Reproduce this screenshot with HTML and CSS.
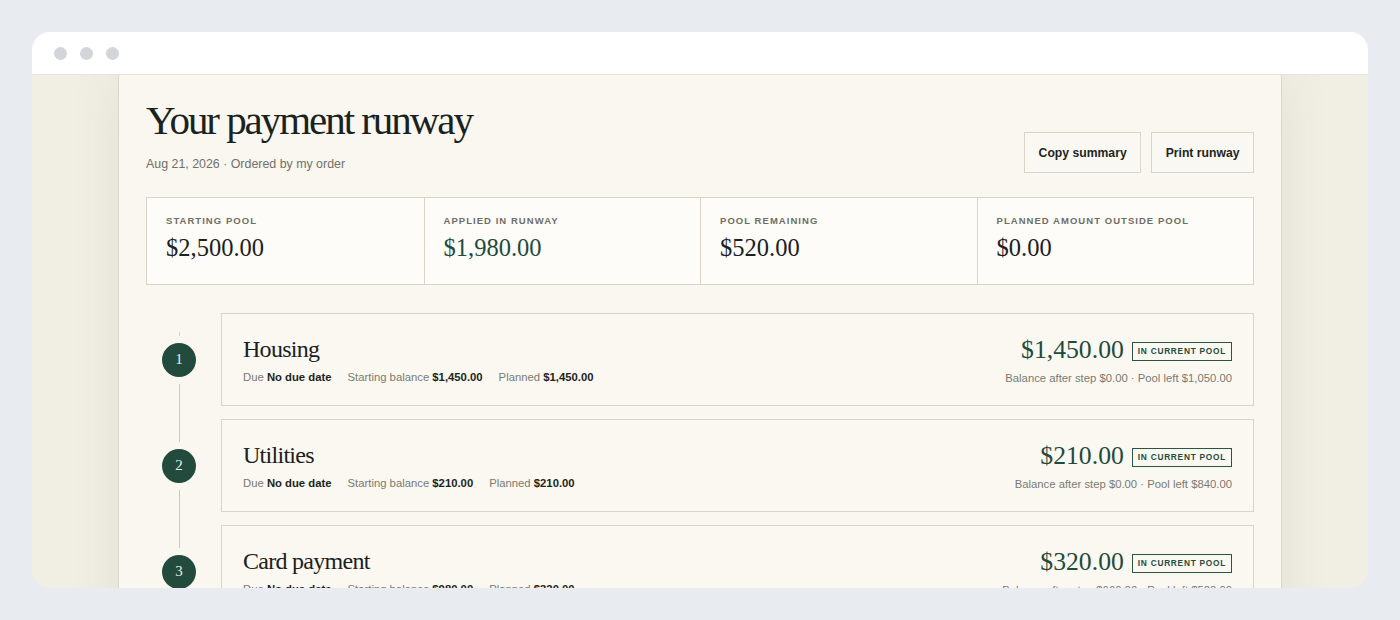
FILE: index.html
```html
<!DOCTYPE html>
<html lang="en">
<head>
  <meta charset="UTF-8" />
  <meta name="viewport" content="width=device-width, initial-scale=1.0"/>
  <title>Your payment runway</title>
  <link rel="stylesheet" href="styles.css">
</head>
<body>
  <div class="window">
    <div class="titlebar">
      <span class="dot"></span>
      <span class="dot"></span>
      <span class="dot"></span>
    </div>

    <div class="viewport">
      <main class="page">
        <header class="page-head">
          <div>
            <h1>Your payment runway</h1>
            <p class="subtitle">Aug 21, 2026 · Ordered by my order</p>
          </div>
          <div class="actions">
            <button class="btn">Copy summary</button>
            <button class="btn">Print runway</button>
          </div>
        </header>

        <section class="stats">
          <div class="stat">
            <span class="stat-label">Starting pool</span>
            <div class="stat-value">$2,500.00</div>
          </div>
          <div class="stat">
            <span class="stat-label">Applied in runway</span>
            <div class="stat-value accent">$1,980.00</div>
          </div>
          <div class="stat">
            <span class="stat-label">Pool remaining</span>
            <div class="stat-value">$520.00</div>
          </div>
          <div class="stat">
            <span class="stat-label">Planned amount outside pool</span>
            <div class="stat-value">$0.00</div>
          </div>
        </section>

        <ol class="steps">
          <li class="step">
            <div class="rail"><span class="num">1</span></div>
            <div class="card">
              <div class="card-main">
                <h3>Housing</h3>
                <div class="meta">
                  <span>Due <b>No due date</b></span>
                  <span>Starting balance <b>$1,450.00</b></span>
                  <span>Planned <b>$1,450.00</b></span>
                </div>
              </div>
              <div class="card-side">
                <div class="amount-row">
                  <span class="amount">$1,450.00</span>
                  <span class="badge">In current pool</span>
                </div>
                <div class="after">Balance after step $0.00 · Pool left $1,050.00</div>
              </div>
            </div>
          </li>

          <li class="step">
            <div class="rail"><span class="num">2</span></div>
            <div class="card">
              <div class="card-main">
                <h3>Utilities</h3>
                <div class="meta">
                  <span>Due <b>No due date</b></span>
                  <span>Starting balance <b>$210.00</b></span>
                  <span>Planned <b>$210.00</b></span>
                </div>
              </div>
              <div class="card-side">
                <div class="amount-row">
                  <span class="amount">$210.00</span>
                  <span class="badge">In current pool</span>
                </div>
                <div class="after">Balance after step $0.00 · Pool left $840.00</div>
              </div>
            </div>
          </li>

          <li class="step">
            <div class="rail"><span class="num">3</span></div>
            <div class="card">
              <div class="card-main">
                <h3>Card payment</h3>
                <div class="meta">
                  <span>Due <b>No due date</b></span>
                  <span>Starting balance <b>$980.00</b></span>
                  <span>Planned <b>$320.00</b></span>
                </div>
              </div>
              <div class="card-side">
                <div class="amount-row">
                  <span class="amount">$320.00</span>
                  <span class="badge">In current pool</span>
                </div>
                <div class="after">Balance after step $660.00 · Pool left $520.00</div>
              </div>
            </div>
          </li>
        </ol>
      </main>
    </div>
  </div>
</body>
</html>
```

FILE: styles.css
```css
* {
  box-sizing: border-box;
  margin: 0;
  padding: 0;
}

body {
  font-family: 'Liberation Sans', Arial, sans-serif;
  background: #e8ebf0;
  padding: 32px;
  height: 100vh;
  overflow: hidden;
  color: #1d2420;
}

.window {
  height: 100%;
  display: flex;
  flex-direction: column;
  background: #f3f0e6;
  border-radius: 18px;
  overflow: hidden;
}

.titlebar {
  height: 43px;
  flex-shrink: 0;
  background: #fff;
  border-bottom: 1px solid #e3e3e0;
  display: flex;
  align-items: center;
  gap: 13px;
  padding-left: 22px;
  padding-top: 1px;
}

.dot {
  width: 13px;
  height: 13px;
  border-radius: 50%;
  background: #d3d5db;
}

.viewport {
  flex: 1;
  overflow: hidden;
  background: #f1eee4;
}

.page {
  max-width: 1164px;
  min-height: 100%;
  margin: 0 auto;
  padding: 23px 27px;
  background: #f9f7f0;
  border-left: 1px solid #dcd7ca;
  border-right: 1px solid #dcd7ca;
  box-shadow: 0 0 50px rgba(90, 75, 40, 0.09);
}

/* Header */
.page-head {
  display: flex;
  justify-content: space-between;
  align-items: flex-end;
}

.page-head h1 {
  font-family: 'Liberation Serif', 'Times New Roman', serif;
  font-weight: 400;
  font-size: 41px;
  line-height: 1.1;
  letter-spacing: -0.05em;
  color: #1a221d;
}

.subtitle {
  margin-top: 12px;
  font-size: 12.4px;
  line-height: 18px;
  color: #707069;
}

.actions {
  display: flex;
  gap: 10px;
}

.btn {
  font-family: inherit;
  font-size: 12.2px;
  font-weight: 700;
  color: #1d2420;
  background: #faf8f2;
  border: 1px solid #d9d4c6;
  height: 41px;
  padding: 0 13.5px;
  cursor: pointer;
}

/* Stats */
.stats {
  margin-top: 24px;
  display: grid;
  grid-template-columns: repeat(4, 1fr);
  background: #fdfcf8;
  border: 1px solid #d9d4c6;
}

.stat {
  padding: 16px 19px 21px;
}

.stat + .stat {
  border-left: 1px solid #d9d4c6;
}

.stat-label {
  display: block;
  font-size: 9.5px;
  line-height: 13px;
  font-weight: 700;
  letter-spacing: 0.11em;
  text-transform: uppercase;
  color: #6e6e67;
}

.stat-value {
  margin-top: 6px;
  font-family: 'Liberation Serif', 'Times New Roman', serif;
  font-size: 24.5px;
  line-height: 30px;
  color: #1b211d;
}

.stat-value.accent {
  color: #1f4a3d;
}

/* Steps */
.steps {
  list-style: none;
  margin-top: 28px;
  display: flex;
  flex-direction: column;
  gap: 13px;
}

.step {
  display: flex;
  gap: 9px;
}

.rail {
  width: 66px;
  flex-shrink: 0;
  display: flex;
  flex-direction: column;
  align-items: center;
}

.rail::before,
.rail::after {
  content: '';
  flex: 1;
  width: 1px;
  background: #cdc8ba;
}

.rail::before {
  margin-top: -13px;
  margin-bottom: 7px;
}

.rail::after {
  margin-top: 7px;
  margin-bottom: -13px;
}

.step:first-child .rail::before {
  background: linear-gradient(180deg, transparent 0%, transparent 88%, #d8d3c6 88%, #d8d3c6 100%);
}

.num {
  width: 34px;
  height: 34px;
  border-radius: 50%;
  background: #224b3e;
  color: #e6eee8;
  display: flex;
  align-items: center;
  justify-content: center;
  font-family: 'Liberation Serif', 'Times New Roman', serif;
  font-size: 15px;
}

.card {
  flex: 1;
  display: flex;
  justify-content: space-between;
  align-items: center;
  padding: 20px 21px 19px;
  background: #faf8f1;
  border: 1px solid #d9d4c6;
}

.card-main h3 {
  font-family: 'Liberation Serif', 'Times New Roman', serif;
  font-weight: 400;
  font-size: 24px;
  line-height: 29px;
  letter-spacing: -0.03em;
  color: #1b211d;
}

.meta {
  margin-top: 5px;
  display: flex;
  gap: 16px;
  font-size: 11.3px;
  line-height: 16px;
  color: #7a7a72;
}

.meta b {
  color: #1d2420;
}

.card-side {
  text-align: right;
}

.amount-row {
  display: flex;
  align-items: center;
  justify-content: flex-end;
  gap: 8px;
}

.amount {
  font-family: 'Liberation Serif', 'Times New Roman', serif;
  font-size: 25.7px;
  line-height: 31px;
  color: #1f4a3d;
}

.badge {
  margin-top: 3px;
  border: 1.5px solid #2a5546;
  padding: 0 5px;
  height: 19px;
  display: flex;
  align-items: center;
  font-size: 8.3px;
  font-weight: 700;
  letter-spacing: 0.09em;
  text-transform: uppercase;
  color: #1f4a3d;
}

.after {
  margin-top: 5px;
  font-size: 11.3px;
  line-height: 16px;
  color: #7a7a72;
}
```
